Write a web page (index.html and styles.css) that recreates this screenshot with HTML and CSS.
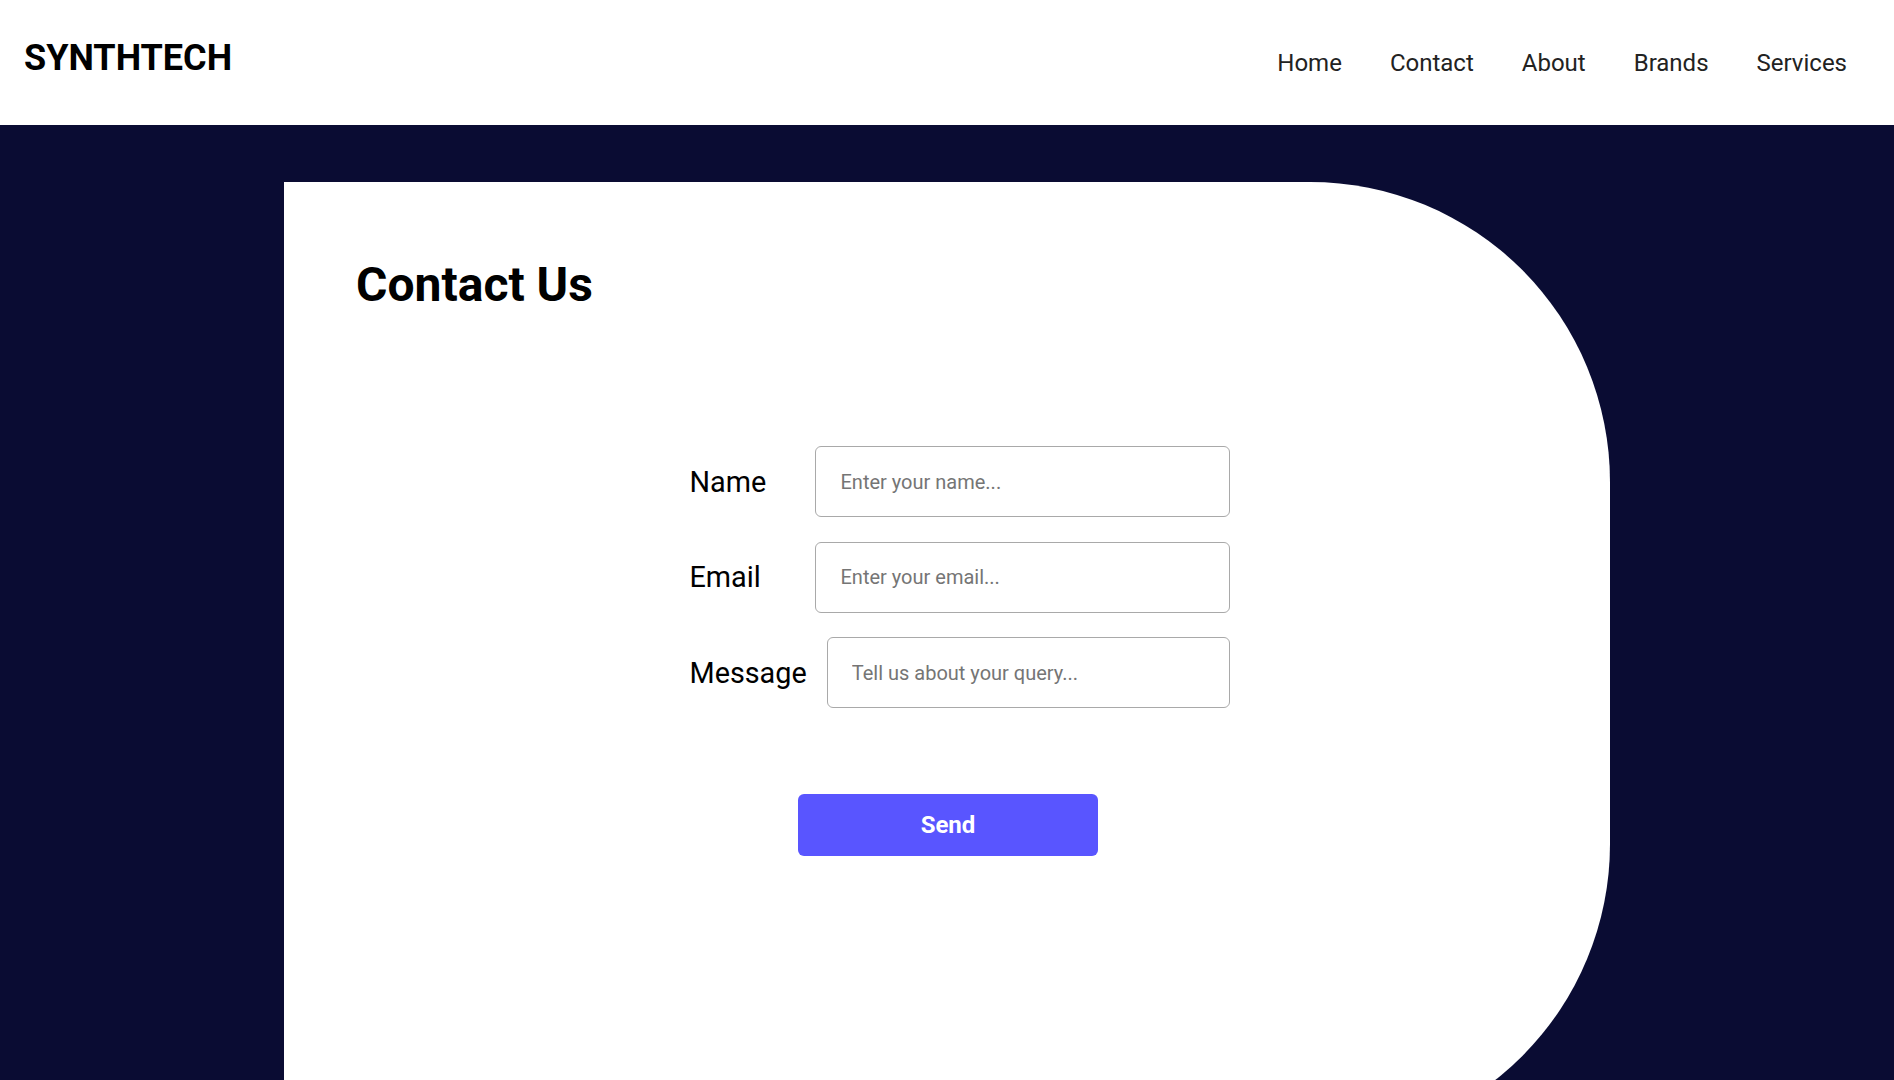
FILE: index.html
```html
<!DOCTYPE html>
<html lang="en">
<head>
<meta charset="utf-8">
<title>SynthTech - Contact</title>
<link rel="stylesheet" href="styles.css">
</head>
<body>
<header class="site-header">
  <div class="logo">SYNTHTECH</div>
  <nav class="nav">
    <a href="#" class="nav-link">Home</a>
    <a href="#" class="nav-link">Contact</a>
    <a href="#" class="nav-link">About</a>
    <a href="#" class="nav-link">Brands</a>
    <a href="#" class="nav-link">Services</a>
  </nav>
</header>
<main class="main">
  <section class="card">
    <h1 class="title">Contact Us</h1>
    <form class="form">
      <div class="row">
        <label class="label" for="name">Name</label>
        <input class="field" id="name" type="text" placeholder="Enter your name...">
      </div>
      <div class="row">
        <label class="label" for="email">Email</label>
        <input class="field" id="email" type="email" placeholder="Enter your email...">
      </div>
      <div class="row">
        <label class="label" for="msg">Message</label>
        <input class="field" id="msg" type="text" placeholder="Tell us about your query...">
      </div>
    </form>
    <div class="actions">
      <button class="send" type="button">Send</button>
    </div>
  </section>
</main>
</body>
</html>
```
FILE: styles.css
```css
* { box-sizing: border-box; }

html, body {
  margin: 0;
  padding: 0;
}

body {
  font-family: Roboto, "Liberation Sans", Arial, sans-serif;
  background: #0a0c33;
  color: #000;
  overflow: hidden;
}

.site-header {
  height: 125px;
  background: #ffffff;
  display: flex;
  justify-content: space-between;
  align-items: flex-start;
  padding: 0 47px 0 24px;
}

.logo {
  margin-top: 37px;
  font-size: 36px;
  font-weight: 700;
  line-height: normal;
  color: #000;
}

.nav {
  margin-top: 49px;
  display: flex;
  gap: 48px;
}

.nav-link {
  font-size: 24px;
  line-height: normal;
  color: #222;
  text-decoration: none;
}

.main {
  background: #0a0c33;
  padding-top: 57px;
  height: 955px;
}

.card {
  width: 70%;
  height: 962px;
  margin: 0 auto;
  background: #ffffff;
  border-radius: 0 300px 300px 0;
  padding: 74px 70px 0 72px;
}

.title {
  margin: 0;
  font-size: 48px;
  font-weight: 700;
  line-height: normal;
}

.form {
  width: 564px;
  margin: 133px auto 0;
  padding-left: 23.5px;
  display: flex;
  flex-direction: column;
  gap: 24.5px;
}

.row {
  display: flex;
  align-items: center;
  gap: 20px;
}

.label {
  min-width: 106px;
  font-size: 28.8px;
  color: #000;
}

.field {
  flex: 1;
  height: 71px;
  padding: 0 24px;
  border: 1px solid #a9a9a9;
  border-radius: 6px;
  font-family: Roboto, "Liberation Sans", Arial, sans-serif;
  font-size: 20px;
  color: #222;
  background: #fff;
  outline: none;
}

.field::placeholder {
  color: #757575;
}

.actions {
  display: flex;
  justify-content: center;
  margin-top: 86px;
}

.send {
  width: 300px;
  height: 62px;
  border: none;
  border-radius: 6px;
  background: #5955ff;
  color: #ffffff;
  font-family: Roboto, "Liberation Sans", Arial, sans-serif;
  font-size: 24px;
  font-weight: 700;
  cursor: pointer;
}
```
